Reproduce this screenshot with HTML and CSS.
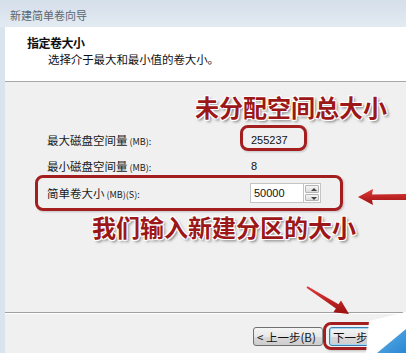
FILE: index.html
```html
<!DOCTYPE html>
<html lang="zh-CN">
<head>
    <meta charset="UTF-8">
    <title>新建简单卷向导</title>
    <link rel="stylesheet" href="styles.css">
</head>
<body>
    <div class="screen">
        <div class="titlebar">新建简单卷向导</div>
        <div class="frame">
            <div class="dialog">
                <div class="header">
                    <div class="header-title">指定卷大小</div>
                    <div class="header-sub">选择介于最大和最小值的卷大小。</div>
                </div>
                <div class="body">
                    <div class="fields">
                        <div class="row">
                            <span class="label">最大磁盘空间量<small>(MB):</small></span>
                            <span class="value">255237</span>
                        </div>
                        <div class="row">
                            <span class="label">最小磁盘空间量<small>(MB):</small></span>
                            <span class="value">8</span>
                        </div>
                        <div class="row row-input">
                            <span class="label">简单卷大小<small>(MB)(S):</small></span>
                            <div class="spin">
                                <input type="text" value="50000">
                                <div class="spin-buttons">
                                    <span class="spin-up"></span>
                                    <span class="spin-down"></span>
                                </div>
                            </div>
                        </div>
                    </div>
                    <div class="footer">
                        <div class="buttons">
                            <button type="button">&lt; 上一步(B)</button>
                            <button type="button">下一步(N)</button>
                        </div>
                    </div>
                </div>
            </div>
        </div>

        <!-- red annotations drawn over the dialog -->
        <div class="mark mark-max"></div>
        <div class="mark mark-size"></div>
        <div class="mark mark-next"></div>
        <div class="note note-top">未分配空间总大小</div>
        <div class="note note-bottom">我们输入新建分区的大小</div>
        <svg class="overlay" width="406" height="353" viewBox="0 0 406 353">
            <defs>
                <linearGradient id="arrowRed" x1="0" y1="0" x2="0" y2="1">
                    <stop offset="0" stop-color="#e23a3a"/>
                    <stop offset="1" stop-color="#9a1010"/>
                </linearGradient>
                <linearGradient id="cornerBlue" x1="0" y1="0" x2="1" y2="1">
                    <stop offset="0" stop-color="#5fb3ea"/>
                    <stop offset="1" stop-color="#2a86d2"/>
                </linearGradient>
            </defs>
            <polygon points="358,197 373,189 372,194.5 406,194 406,200 372,200 373,205" fill="url(#arrowRed)"/>
            <polygon points="307.5,286.2 338.5,304.3 341,300.5 349,314 333.4,312.3 335.9,308.5 306.5,287.8" fill="url(#arrowRed)"/>
            <polygon points="369,321 406,312 406,353 366,353" fill="#ffffff"/>
            <polygon points="377,353 406,329 406,353" fill="url(#cornerBlue)"/>
        </svg>
    </div>
</body>
</html>
```

FILE: styles.css
```css
body {
    margin: 0;
    padding: 0;
    font-family: "Noto Sans CJK SC", "Liberation Sans", sans-serif;
    font-size: 12px;
    color: #111;
    background: #f0f0f0;
}
.screen {
    position: relative;
    width: 406px;
    height: 353px;
    overflow: hidden;
    display: flex;
    flex-direction: column;
}
.titlebar {
    height: 27px;
    line-height: 30px;
    padding-left: 10px;
    font-size: 11px;
    color: #5c6670;
    background: linear-gradient(to bottom, #d5dfea, #e3eaf2);
    flex: none;
}
.frame {
    flex: 1;
    display: flex;
    border-left: 5px solid #d9e4ef;
}
.dialog {
    flex: 1;
    display: flex;
    flex-direction: column;
}
.header {
    height: 55px;
    background: #fff;
    border-bottom: 1px solid #a7a7a7;
    padding: 8px 0 0 22px;
    box-sizing: border-box;
    line-height: 16px;
}
.header-title {
    font-weight: bold;
    font-size: 12px;
    letter-spacing: -0.5px;
}
.header-sub {
    margin-left: 21px;
    font-size: 11.5px;
    letter-spacing: -0.1px;
}
.body {
    flex: 1;
    display: flex;
    flex-direction: column;
    background: #f0f0f0;
}
.fields {
    padding: 49px 0 0 42px;
    flex: 1;
}
.row {
    display: flex;
    align-items: center;
    height: 18px;
    margin-bottom: 8px;
}
.row-input {
    height: 20px;
    margin-top: 2px;
}
.label {
    width: 203px;
    font-size: 11.5px;
    color: #1a1a1a;
}
.label small {
    font-size: 9px;
    margin-left: 2px;
}
.value {
    font-family: "Liberation Sans", sans-serif;
    font-size: 11px;
    margin-left: 1px;
}
.spin {
    display: flex;
    height: 20px;
}
.spin input {
    width: 53px;
    height: 20px;
    box-sizing: border-box;
    border: 1px solid #c4c4c4;
    border-right: none;
    padding: 0 0 0 3px;
    margin: 0;
    font-family: "Liberation Sans", sans-serif;
    font-size: 11px;
    color: #111;
    background: #fff;
}
.spin-buttons {
    width: 18px;
    display: flex;
    flex-direction: column;
    border: 1px solid #c4c4c4;
    box-sizing: border-box;
    background: #fff;
    padding: 1px;
    gap: 1px;
}
.spin-buttons span {
    flex: 1;
    background: linear-gradient(to bottom, #f6f6f6, #dcdcdc);
    border: 1px solid #b5b5b5;
    border-radius: 1px;
    position: relative;
}
.spin-up::after, .spin-down::after {
    content: "";
    position: absolute;
    left: 5px;
    top: 2px;
    border-left: 3px solid transparent;
    border-right: 3px solid transparent;
}
.spin-up::after {
    border-bottom: 3px solid #444;
}
.spin-down::after {
    border-top: 3px solid #444;
}
.footer {
    border-top: 1px solid #a0a0a0;
    box-shadow: inset 0 1px 0 #fff;
    margin-right: 9px;
    height: 41px;
    box-sizing: border-box;
    padding-top: 14px;
}
.buttons {
    display: flex;
    gap: 6px;
    padding-left: 248px;
}
.footer button {
    flex: none;
    height: 19px;
    width: 70px;
    font-family: "Noto Sans CJK SC", sans-serif;
    font-size: 11.5px;
    line-height: 16px;
    color: #111;
    border: 1px solid #707070;
    border-radius: 3px;
    background: linear-gradient(to bottom, #f4f4f4 0%, #e8e8e8 50%, #d9d9d9 51%, #cdcdcd 100%);
    text-align: left;
    padding: 0 0 0 3px;
}
.footer button + button {
    width: 74px;
    border-color: #3c7fb1;
    box-shadow: inset 0 0 0 1px #a4d8f4;
}
.mark {
    position: absolute;
    border: 3px solid #a31e1e;
    border-radius: 8px;
    box-sizing: border-box;
    box-shadow: 0 0 2px rgba(255, 255, 255, 0.9), 1px 1px 2px rgba(0, 0, 0, 0.25);
}
.mark-max {
    left: 240px;
    top: 125px;
    width: 67px;
    height: 26px;
}
.mark-size {
    left: 35px;
    top: 175px;
    width: 308px;
    height: 36px;
}
.mark-next {
    left: 323px;
    top: 322px;
    width: 55px;
    height: 28px;
}
.note {
    position: absolute;
    font-family: "Noto Sans CJK SC", sans-serif;
    font-weight: bold;
    font-size: 24px;
    line-height: 24px;
    color: #9c1717;
    white-space: nowrap;
    text-shadow: -1px -1px 0 #fff, 1px -1px 0 #fff, -1px 1px 0 #fff, 1px 1px 0 #fff,
        0 0 3px #fff, 2px 2px 3px rgba(0, 0, 0, 0.55);
}
.note-top {
    left: 195px;
    top: 95px;
}
.note-bottom {
    left: 92px;
    top: 215px;
}
.overlay {
    position: absolute;
    left: 0;
    top: 0;
    pointer-events: none;
}
```
